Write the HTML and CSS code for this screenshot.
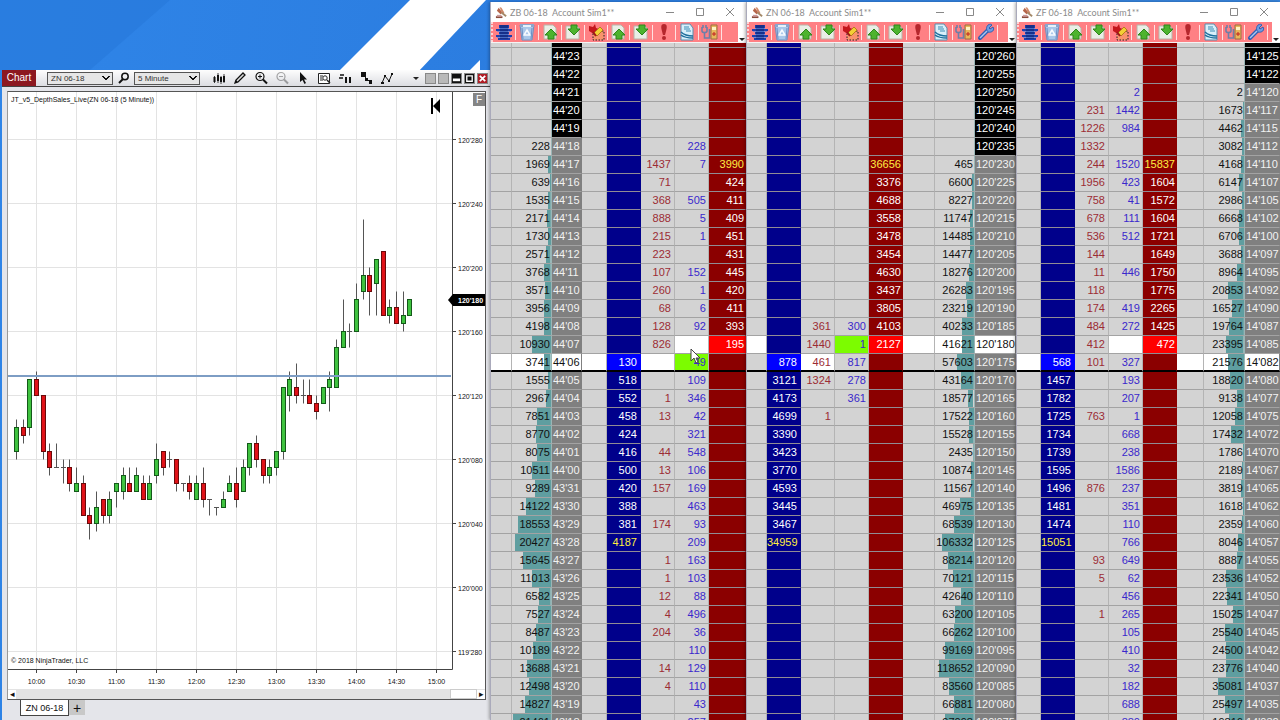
FILE: index.html
```html
<!DOCTYPE html>
<html lang="en">
<head>
<meta charset="utf-8">
<title>Trading desktop</title>
<link rel="stylesheet" href="styles.css">
</head>
<body>
<svg class="symbols" aria-hidden="true">
  <symbol id="gavel" viewBox="0 0 14 14"><path d="M4 2l4 5-2 2-4-4z" fill="#b5654a"/><path d="M5 1l2 1 3 5-1 2-2-2z" fill="#d08a6a"/><path d="M7 7l5 4" stroke="#a58a6a" stroke-width="2"/><path d="M1 11h7v2H1z" fill="#8a4a3a"/><path d="M2 9.500h5v2H2z" fill="#c99"/></symbol>
  <symbol id="rows" viewBox="0 0 18 18"><path d="M4 2h10v3H4zM1 6h16v2H1zM4 9h10v2H4zM1 12h16v2H1zM3 15h12v2H3z" fill="#1c3fae"/><path d="M5 2h8v14H5z" fill="#16308a"/><path d="M4 5.500h10M2 8.500h14M4 11.500h10M2 14.500h14" stroke="#5f86d8" stroke-width=".7"/></symbol>
  <symbol id="bin" viewBox="0 0 18 18"><path d="M2 2l2 15h10l2-15z" fill="#a9c7ea" stroke="#6f8fbe"/><path d="M2 1h14v3H2z" fill="#8aa6cd"/><path d="M5 3h8" stroke="#e6f1fb" stroke-width="2"/><path d="M6 12l3-5 3 5z" fill="none" stroke="#f7fbff" stroke-width="1.500"/><path d="M4 5l1 11M14 5l-1 11" stroke="#6d8fc4"/></symbol>
  <symbol id="up" viewBox="0 0 18 18"><path d="M3 2h9l3 3v11H3z" fill="#e9eee6" stroke="#b8b4a8"/><path d="M10 6l6 6h-3v4H7v-4H4z" fill="#4db32e" stroke="#2d861a"/></symbol>
  <symbol id="down" viewBox="0 0 18 18"><path d="M2 3h11l2 2v11H2z" fill="#e9eee6" stroke="#b8b4a8"/><path d="M10 12l6-6h-3V2H7v4H4z" fill="#4db32e" stroke="#2d861a"/></symbol>
  <symbol id="brush" viewBox="0 0 18 18"><path d="M6 8h11v9H6z" fill="#f0b048" fill-opacity=".4" stroke="#202020" stroke-dasharray="1.500 1.500"/><path d="M2 3l4 1 2-3 1 4 3 1-5 5-5-3z" fill="#c4161c"/><path d="M7 10l6-6 3 3-6 6z" fill="#f4cf35" stroke="#b4801c"/><path d="M6 9l3 4" stroke="#a01818" stroke-width="2"/></symbol>
  <symbol id="alert" viewBox="0 0 18 18"><path d="M9 1c4 0 3 4 1 11H8C6 5 5 1 9 1z" fill="#b5272d"/><circle cx="9" cy="15" r="2" fill="#b5272d"/></symbol>
  <symbol id="report" viewBox="0 0 18 18"><path d="M3 1h9l3 4v12H3z" fill="#d8effa" stroke="#5b8fae"/><path d="M6 4h5M6 6h6M8 8h5" stroke="#3c8db5"/><path d="M3 9c3 3 6 4 12 4M3 12c4 3 8 3 12 3" fill="none" stroke="#1e6f9c" stroke-width="1.500"/></symbol>
  <symbol id="link" viewBox="0 0 18 18"><path d="M1 4v4c0 2 5 2 5 0V4M2 2v3M5 2v3M3.500 9v6h5v-9" fill="none" stroke="#6e7fa8" stroke-width="1.600"/><path d="M10 2h6v14h-6z" fill="#e9b65a" stroke="#9a7140"/><path d="M11 4h4v3h-4z" fill="#fff3c4"/><path d="M11 11h4M13 9v4" stroke="#c02020"/></symbol>
  <symbol id="wrench" viewBox="0 0 18 18"><path d="M3 15l8-8" stroke="#2f5fb4" stroke-width="4" stroke-linecap="round"/><path d="M11 2c2-1 3-1 4 0l-3 3 1 1 3-2c2 3-1 6-5 5-2-2-2-5 0-7z" fill="#6c9ce0" stroke="#2f5fb4"/><path d="M3 15l7-7" stroke="#a8c6f0" stroke-width="1.500"/></symbol>
</svg>

<main class="desktop">
  <svg class="wallpaper" aria-hidden="true">
    <path d="M0 0H170L90 70H0z" fill="#2375d8" opacity=".5"/>
    <path d="M338 72L410 0H486L418 72z" fill="#fff"/>
    <path d="M468 72L480 60V72z" fill="#fff"/>
  </svg>

  <section class="chart-window" aria-label="Chart">
    <header class="chart-bar">
      <strong class="chart-tag">Chart</strong>
      <select class="pick" aria-label="Instrument"><option>ZN 06-18</option></select>
      <button class="tool" aria-label="Search"><svg viewBox="0 0 14 14"><circle cx="8" cy="5.500" r="3.200" fill="none" stroke="#111" stroke-width="1.500"/><path d="M6 8l-4 4" stroke="#111" stroke-width="2"/></svg></button>
      <select class="pick" aria-label="Interval"><option>5 Minute</option></select>
      <div class="tools">
        <button class="tool" aria-label="Chart style"><svg viewBox="0 0 14 14"><path d="M2.500 6v5M6 4v6M9 6v5M12 5v6" stroke="#111" stroke-width="2"/><path d="M2.500 5v7M6 2v10M9 5v8M12 3v9" stroke="#111" stroke-width=".8"/></svg></button>
        <button class="tool" aria-label="Draw"><svg viewBox="0 0 14 14"><path d="M2 12l1-3 7-7 2 2-7 7z" fill="#ddd" stroke="#111" stroke-width="1.300"/><path d="M2 12l1-3 2 2z" fill="#111"/></svg></button>
        <button class="tool" aria-label="Zoom in"><svg viewBox="0 0 14 14"><circle cx="6" cy="5.500" r="4" fill="none" stroke="#111" stroke-width="1.200"/><path d="M9 8.500l4 4" stroke="#111" stroke-width="2"/><path d="M4 5.500h4M6 3.500v4" stroke="#111"/></svg></button>
        <button class="tool faded" aria-label="Zoom out"><svg viewBox="0 0 14 14"><circle cx="6" cy="5.500" r="4" fill="none" stroke="#111" stroke-width="1.200"/><path d="M9 8.500l4 4" stroke="#111" stroke-width="2"/><path d="M4 5.500h4" stroke="#111"/></svg></button>
        <button class="tool" aria-label="Pointer"><svg viewBox="0 0 14 14"><path d="M4 1v10l2.500-2 2 4 1.500-1-2-3.500H11z" fill="#111"/></svg></button>
        <button class="tool" aria-label="Data box"><svg viewBox="0 0 14 14"><path d="M1.500 2.500h11v10h-11z" fill="#fff" stroke="#222"/><path d="M3 5h3M3 7h2M3 9h3" stroke="#222"/><circle cx="8" cy="7" r="2.200" fill="#fff" stroke="#222"/><path d="M10 9l3 3" stroke="#222" stroke-width="1.500"/></svg></button>
        <button class="tool" aria-label="Chart trader"><svg viewBox="0 0 14 14"><path d="M2 4h4M1 7h4" stroke="#111" stroke-width="1.500"/><path d="M8 6v6M12 6v6" stroke="#111" stroke-width="2"/></svg></button>
        <button class="tool" aria-label="Strategies"><svg viewBox="0 0 14 14"><path d="M2 1h5v5H2zM6 7h3v3H6zM10 9h3v4h-3z" fill="#111"/><path d="M6 6l6 6" stroke="#111"/></svg></button>
        <button class="tool" aria-label="Indicators"><svg viewBox="0 0 14 14"><path d="M2 12l3-7 4 5 3-7" fill="none" stroke="#111"/><path d="M1 11h3v2H1zM4 4h2v2H4zM8 9h2v2H8zM11 2h2v2h-2z" fill="#111"/></svg></button>
      </div>
      <div class="boxes">
        <span class="caret"></span>
        <button class="box" aria-label="Link instrument"></button>
        <button class="box" aria-label="Link interval"></button>
        <button class="box dark" aria-label="Minimize"><svg viewBox="0 0 10 10"><path d="M1 5h8v3H1z" fill="#fff"/></svg></button>
        <button class="box dark" aria-label="Maximize"><svg viewBox="0 0 10 10"><path d="M2 2h6v6H2z" fill="none" stroke="#fff" stroke-width="1.500"/></svg></button>
        <button class="box close" aria-label="Close"><svg viewBox="0 0 10 10"><path d="M2 2l6 6M8 2L2 8" stroke="#fff" stroke-width="2"/></svg></button>
      </div>
    </header>
    <div class="chart-frame">
      <svg class="plot" id="plot" viewBox="0 0 477 597" role="img" aria-label="ZN 06-18 five minute candles"></svg>
      <div class="scroller">
        <button class="arrow" aria-label="Scroll left">◂</button>
        <span class="thumb"></span>
        <button class="arrow" aria-label="Scroll right">▸</button>
      </div>
    </div>
    <nav class="tabs">
      <button class="tab">ZN 06-18</button>
      <button class="tab-add" aria-label="Add tab">+</button>
    </nav>
  </section>

  <section class="ladder zb" id="zb" aria-label="ZB ladder">
    <svg class="pointer" viewBox="0 0 12 18" aria-hidden="true"><path d="M1 1v12l3-3 2 5 2-1-2-4h4z" fill="#fff" stroke="#444"/></svg>
  </section>
  <section class="ladder zn" id="zn" aria-label="ZN ladder"></section>
  <section class="ladder zf" id="zf" aria-label="ZF ladder"></section>
</main>
<script src="app.js"></script>
</body>
</html>
```
FILE: styles.css
```css
* { box-sizing: border-box; }

body {
  margin: 0;
  background: #2b7cdf;
  font-family: "Liberation Sans", Arial, sans-serif;
  color: #111;
}

button, select {
  font: inherit;
  color: inherit;
  margin: 0;
  padding: 0;
  border: 0;
  background: none;
}

.symbols { display: none; }

.desktop {
  position: relative;
  display: grid;
  grid-template-columns: 490fr 256fr 270fr 264fr;
  grid-template-rows: minmax(0, 1fr);
  height: 100vh;
  overflow: hidden;
  background: linear-gradient(100deg, #2f85e8, #2b7cdf 40%, #3a86dc);
}

.wallpaper {
  position: absolute;
  left: 0;
  top: 0;
  width: 492px;
  height: 72px;
}

/* Chart window */
.chart-window {
  position: relative;
  display: flex;
  flex-direction: column;
  min-width: 0;
  margin: 70px 0 0 2px;
  background: #e4e5ea;
}

.chart-bar {
  display: flex;
  align-items: center;
  height: 17px;
  padding-right: 2px;
  border-bottom: 1px solid #444;
  background: linear-gradient(#fdfdfd, #dcdde2);
}

.chart-tag {
  align-self: stretch;
  width: 34px;
  margin-right: 11px;
  background: #8c1820;
  color: #fff;
  font-size: 10px;
  font-weight: 400;
  line-height: 16px;
  text-align: center;
}

.pick {
  appearance: none;
  width: 66px;
  height: 13px;
  padding-left: 3px;
  border: 1px solid #555;
  border-radius: 0;
  background-color: #e6e6e6;
  color: #333;
  font-size: 8px;
  line-height: 11px;
  background-image:
    linear-gradient(45deg, transparent 50%, #111 50%, #111 75%, transparent 75%),
    linear-gradient(-45deg, transparent 50%, #111 50%, #111 75%, transparent 75%);
  background-size: 4px 4px;
  background-position: right 6px center, right 2px center;
  background-repeat: no-repeat;
}

.tool {
  width: 21px;
  height: 14px;
  display: flex;
  justify-content: center;
}

.tool svg { width: 14px; height: 14px; }
.faded { opacity: .35; }
.tools { display: flex; margin-left: 8px; }

.boxes {
  display: flex;
  align-items: center;
  gap: 2px;
  margin-left: auto;
}

.caret {
  margin-right: 4px;
  border: 3px solid transparent;
  border-top-color: #222;
  border-bottom: 0;
}

.box {
  width: 11px;
  height: 11px;
  border: 1px solid #888;
  background: #b9b9b9;
  line-height: 0;
}

.box svg { width: 9px; height: 9px; }
.dark { background: #111; }
.close { background: #b01c24; }

.chart-frame {
  flex: 1;
  min-height: 0;
  display: flex;
  flex-direction: column;
  margin: 4px 4px 0 5px;
  border: 1px solid #555;
  border-left: 1px solid #999;
  background: #fff;
}

.plot { display: block; width: 100%; flex: 1; min-height: 0; }
.grid { stroke: #e3e3e3; }
.axis { stroke: #444; }
.level { stroke: #7d9dc4; stroke-width: 2; }
.wick { stroke: #555; }
.up { fill: #3fc23f; stroke: #14591a; }
.fall { fill: #e01218; stroke: #6a0a0a; }
.small { font-size: 7px; fill: #111; }
.center { text-anchor: middle; }
.last { fill: #fff; font-weight: 700; }

.scroller {
  display: flex;
  align-items: center;
  flex: none;
  height: 10px;
  background: #e3e3e3;
}

.arrow { width: 8px; font-size: 9px; line-height: 9px; background: #fff; }
.thumb {
  width: 27px;
  height: 10px;
  margin-left: auto;
  border: 1px solid #ccc;
  background: #fff;
}

.tabs { display: flex; flex: none; height: 20px; padding-left: 18px; align-items: flex-start; }
.tab {
  width: 49px;
  height: 16px;
  border: 1px solid #444;
  border-top: 0;
  background: #fff;
  font-size: 9px;
}
.tab-add { width: 16px; height: 15px; background: #c8c8c8; font-size: 14px; line-height: 14px; }

/* Ladder windows */
.ladder {
  position: relative;
  min-width: 0;
  margin-top: 2px;
  border-left: 1px solid #aab;
  background: #d3d3d3;
  box-shadow: -1px 0 3px rgba(0, 0, 0, .3);
}

.titlebar {
  display: flex;
  align-items: center;
  height: 20px;
  padding: 0 11px 0 4px;
  background: #fff;
  color: #8b8b8b;
}

.gavel { width: 13px; height: 13px; margin-right: 2px; }
.title { flex: 1; margin: 0; font-family: Lato, sans-serif; font-weight: 400; font-size: 9px; white-space: pre; }
.sys { display: flex; gap: 20px; }
.sys button { width: 10px; height: 10px; line-height: 0; }
.sys svg { width: 10px; height: 10px; fill: none; stroke: #888; }

.toolbar {
  display: flex;
  height: 21px;
  padding-right: 8px;
  border-bottom: 1px solid #f4f4f4;
  background: #fff;
}

.strip {
  flex: 1;
  display: flex;
  align-items: center;
  padding-right: 10px;
  background: #ff8084;
  border-left: 2px dotted #ffd5d5;
}

.zb .strip { padding-right: 16px; }
.zf .strip { padding-right: 4px; }

.strip button {
  flex: 1;
  height: 15px;
  display: flex;
  align-items: center;
  justify-content: center;
  border-right: 1px solid #ffe2e2;
}

.strip svg { width: 18px; height: 18px; flex: none; }

.overflow {
  position: absolute;
  right: 1px;
  top: 36px;
  border: 3px solid transparent;
  border-top-color: #222;
  border-bottom: 0;
}

.rows {
  width: 100%;
  table-layout: fixed;
  border-collapse: separate;
  border-spacing: 0;
  font-size: 11px;
  line-height: 14px;
}

.rows td {
  height: 18px;
  padding: 0 3px 2px 0;
  border-bottom: 1px solid #a3a3a3;
  border-right: 1px solid #b4b4b4;
  text-align: right;
  overflow: hidden;
  white-space: nowrap;
}

.rows .cut td { height: 5px; padding: 0; line-height: 3px; }
.rows .mark td { padding-bottom: 1px; border-bottom: 2px solid #000; }
.rows .vol { padding-right: 1px; border-right: 1px solid #9ab5b5; background: linear-gradient(#5f9ea0, #5f9ea0) right / var(--bar, 0) 100% no-repeat; }
.rows .price { padding-left: 1px; padding-right: 0; border-right-color: #808080; background: #808080; color: #f2f2f2; text-align: left; }
.rows .far { background: #000; color: #fff; border-right-color: #000; }
.rows .bid { background: #00008b; border-right-color: #00008b; color: #fff; }
.rows .ask { background: #8b0000; border-right-color: #8b0000; color: #fff; }
.rows .ask { padding-right: 1px; }
.rows .bid, .rows .ask { border-bottom-color: #918c94; }
.rows .mark .bid, .rows .mark .ask { border-bottom-color: #000; }
.rows .sell { color: #9c2c34; }
.rows .buy { padding-right: 2px; color: #3a28cc; }
.rows .total { color: #ffee40; }
.rows .white { background-color: #fff; color: #111; }
.rows .white.sell { color: #9c2c34; }
.rows .lime { background: #7cfc00; }
.rows .bid.hot { background: #0000ff; border-right-color: #0000ff; }
.rows .ask.hot { background: #ff0000; border-right-color: #ff0000; }

.pointer {
  position: absolute;
  left: 199px;
  top: 346px;
  width: 12px;
  height: 18px;
}
```
FILE: app.js
```js
// Candles: body top, body bottom, high, low, direction (in price steps above 120'080).
const candles = `4 1 5 0 u|4 3 5 2 d|10 4 10 3 u|10 8 11 8 d|8 1 8 0 d|1 -1 2 -2 d|-1 -1 2 -1 n|-1 -1 0 -3 n|-1 -3 0 -4 d|-3 -4 -1 -4 u
-3 -7 -2 -7 d|-7 -8 -6 -10 d|-6 -8 -4 -9 u|-5 -7 -5 -8 d|-5 -7 -4 -8 u|-3 -4 -3 -6 u|-2 -4 -1 -5 u|-3 -4 -1 -4 d|-2 -4 -1 -4 u|-3 -5 -2 -5 d
-3 -5 -2 -5 u|0 -2 2 -3 u|1 -1 1 -2 d|0 0 1 -1 n|0 -3 0 -4 d|-3 -3 -3 -4 n|-3 -4 -2 -5 d|-3 -5 -2 -5 u|-3 -5 -1 -6 d|-5 -5 -5 -7 n
-6 -6 -6 -7 n|-5 -6 -4 -6 u|-3 -4 -2 -4 u|-3 -5 -1 -6 d|-1 -4 0 -4 u|2 -1 2 -2 u|2 0 3 -1 d|0 -2 0 -3 d|-1 -2 0 -3 u|1 -1 1 -2 u
9 1 9 0 u|10 8 11 6 u|9 8 12 7 d|8 8 10 7 n|8 7 10 7 d|7 6 8 5 d|9 7 9 7 u|10 9 11 6 u|14 9 15 9 u|16 14 20 14 u
16 16 17 14 n|20 16 22 16 u|23 21 30 20 u|23 21 24 18 d|25 22 25 18 u|26 18 26 18 d|19 18 20 17 u|19 17 21 17 d|18 17 21 16 u|20 18 20 18 u`
  .split(/[|\n]/).map(c => c.split(' '));

function drawChart() {
  const parts = [];
  const y = level => 367.5 - 8 * level;
  const times = ['10:00', '10:30', '11:00', '11:30', '12:00', '12:30', '13:00', '13:30', '14:00', '14:30', '15:00'];
  const prices = ["120'280", "120'240", "120'200", "120'160", "120'120", "120'080", "120'040", "120'000", "119'280"];
  times.forEach((t, i) => {
    const x = 28.5 + 40 * i;
    parts.push(`<path class="grid" d="M${x} 0V577"/><path class="axis" d="M${x} 578v3"/><text class="small center" x="${x}" y="592">${t}</text>`);
  });
  prices.forEach((p, i) => {
    const gy = 47.5 + 64 * i;
    parts.push(`<path class="grid" d="M0 ${gy}H444"/><path class="axis" d="M444 ${gy}h4"/><text class="small" x="450" y="${gy + 3}">${p}</text>`);
  });
  parts.push('<path class="axis" d="M444.500 0V577.500H0" fill="none"/>');
  candles.forEach(([top, bottom, high, low, dir], i) => {
    const x = 8.5 + Math.round(i * 20 / 3);
    parts.push(`<path class="wick" d="M${x} ${y(high)}V${y(low)}"/>`);
    parts.push(dir === 'n'
      ? `<path class="wick" d="M${x - 2.5} ${y(top)}h5"/>`
      : `<rect class="${dir === 'u' ? 'up' : 'fall'}" x="${x - 2}" y="${y(top)}" width="4" height="${8 * (top - bottom)}"/>`);
  });
  parts.push('<path class="level" d="M0 284H443"/>');
  parts.push(`<path d="M440 208l5-6h32v12h-32z"/><text class="small last" x="450" y="211">120'180</text>`);
  parts.push('<text class="small" x="3" y="10">JT_v5_DepthSales_Live(ZN 06-18 (5 Minute))</text>');
  parts.push('<text class="small" x="3" y="571">© 2018 NinjaTrader, LLC</text>');
  parts.push('<path d="M423 6h2v16h-2zM425 14l7-7v14z"/>');
  parts.push('<rect x="465" y="1" width="12" height="13" fill="#858585"/><text x="468" y="11" font-size="10" fill="#fff">F</text>');
  document.getElementById('plot').innerHTML = parts.join('');
}

// Row fields: volume, price, bid size, sells, buys, ask size.
const ladders = {
  zb: {
    title: 'ZB 06-18  Account Sim1**', far: 5, barPerLot: 37 / 20427 / 40,
    cols: [['gap', 21], ['vol', 40], ['price', 30], ['gap', 25], ['bid', 34], ['sell', 34], ['buy', 34], ['ask', 37]],
    white: { 16: ['buy'], 17: ['gap', 'vol', 'price', 'sell'] }, lime: 17,
    icons: ['rows', 'bin', 'up', 'down', 'brush', 'up', 'down', 'alert', 'report', 'link'],
    rows: `|44'23||||
|44'22||||
|44'21||||
|44'20||||
|44'19||||
228|44'18|||228|
1969|44'17||1437|7|3990
639|44'16||71||424
1535|44'15||368|505|411
2171|44'14||888|5|409
1730|44'13||215|1|451
2571|44'12||223||431
3768|44'11||107|152|445
3571|44'10||260|1|420
3956|44'09||68|6|411
4198|44'08||128|92|393
10930|44'07||826||195
3741|44'06|130||49|
1555|44'05|518||109|
2967|44'04|552|1|346|
7851|44'03|458|13|42|
8770|44'02|424||321|
8075|44'01|416|44|548|
10511|44'00|500|13|106|
9289|43'31|420|157|169|
14122|43'30|388||463|
18553|43'29|381|174|93|
20427|43'28|4187||209|
15645|43'27||1|163|
11013|43'26||1|103|
6582|43'25||12|88|
7527|43'24||4|496|
8487|43'23||204|36|
10189|43'22|||110|
13688|43'21||14|129|
12498|43'20||4|110|
14827|43'19|||43|
21461|43'18|||257|`.split('\n')
  },
  zn: {
    title: 'ZN 06-18  Account Sim1**', far: 6, barPerLot: 36 / 118652 / 40,
    cols: [['gap', 20], ['bid', 34], ['sell', 34], ['buy', 34], ['ask', 34], ['gap', 32], ['vol', 40], ['price', 41]],
    white: { 16: ['gap', 'vol', 'price'], 17: ['sell'] }, lime: 16,
    icons: ['rows', 'bin', 'up', 'down', 'brush', 'up', 'down', 'alert', 'report', 'link', 'wrench'],
    rows: `|120'260||||
|120'255||||
|120'250||||
|120'245||||
|120'240||||
|120'235||||
465|120'230||||36656
6600|120'225||||3376
8227|120'220||||4688
11747|120'215||||3558
14485|120'210||||3478
14477|120'205||||3454
18276|120'200||||4630
26283|120'195||||3437
23219|120'190||||3805
40233|120'185||361|300|4103
41621|120'180||1440|1|2127
57603|120'175|878|461|817|
43164|120'170|3121|1324|278|
18577|120'165|4173||361|
17522|120'160|4699|1||
15528|120'155|3390|||
2435|120'150|3423|||
10874|120'145|3770|||
11567|120'140|4593|||
46975|120'135|3445|||
68539|120'130|3467|||
106332|120'125|34959|||
88214|120'120||||
70121|120'115||||
42640|120'110||||
63200|120'105||||
66262|120'100||||
99169|120'095||||
118652|120'090||||
83560|120'085||||
66881|120'080||||
97098|120'075||||`.split('\n')
  },
  zf: {
    title: 'ZF 06-18  Account Sim1**', far: 2, barPerLot: 27 / 35081 / 41,
    cols: [['gap', 24], ['bid', 34], ['sell', 34], ['buy', 34], ['ask', 34], ['gap', 27], ['vol', 41], ['price', 35]],
    white: { 16: ['buy'], 17: ['gap', 'vol', 'price'] }, lime: -1,
    icons: ['rows', 'bin', 'up', 'down', 'brush', 'up', 'down', 'alert', 'report', 'link', 'wrench'],
    rows: `|14'125||||
|14'122||||
2|14'120|||2|
1673|14'117||231|1442|
4462|14'115||1226|984|
3082|14'112||1332||
4168|14'110||244|1520|15837
6147|14'107||1956|423|1604
2986|14'105||758|41|1572
6668|14'102||678|111|1604
6706|14'100||536|512|1721
3688|14'097||144||1649
8964|14'095||11|446|1750
20853|14'092||118||1775
16527|14'090||174|419|2265
19764|14'087||484|272|1425
23395|14'085||412||472
21576|14'082|568|101|327|
18820|14'080|1457||193|
9138|14'077|1782||207|
12058|14'075|1725|763|1|
17432|14'072|1734||668|
1786|14'070|1739||238|
2189|14'067|1595||1586|
3819|14'065|1496|876|237|
1618|14'062|1481||351|
2359|14'060|1474||110|
8046|14'057|15051||766|
8887|14'055||93|649|
23536|14'052||5|62|
22341|14'050|||456|
15025|14'047||1|265|
25540|14'045|||105|
24500|14'042|||410|
23776|14'040|||32|
35081|14'037|||182|
25497|14'035|||688|
19816|14'032|||880|`.split('\n')
  }
};

function cell(kind, row, k, spec) {
  const names = [kind];
  if (kind === 'price' && k < spec.far) names.push('far');
  if ((kind === 'ask' && k === 6) || (kind === 'bid' && k === 27)) names.push('total');
  if ((kind === 'ask' && k === 16) || (kind === 'bid' && k === 17)) names.push('hot');
  if ((spec.white[k] || []).includes(kind)) names.push('white');
  if (kind === 'buy' && spec.lime === k) names.push('lime');
  const bar = kind === 'vol' && row.vol ? ` style="--bar:${(row.vol * spec.barPerLot * 100).toFixed(1)}%"` : '';
  return `<td class="${names.join(' ')}"${bar}>${row[kind] || ''}</td>`;
}

function drawLadder(id, spec) {
  const total = spec.cols.reduce((sum, c) => sum + c[1], 0);
  const cols = spec.cols.map(c => `<col style="width:${(c[1] / total * 100).toFixed(3)}%">`).join('');
  const lines = [`<tr class="cut">${spec.cols.map(c => cell(c[0], {}, 0, spec)).join('')}</tr>`];
  spec.rows.forEach((text, k) => {
    const [vol, price, bid, sell, buy, ask] = text.split('|');
    const row = { vol, price, bid, sell, buy, ask };
    lines.push(`<tr${k === 17 ? ' class="mark"' : ''}>${spec.cols.map(c => cell(c[0], row, k, spec)).join('')}</tr>`);
  });
  const icons = spec.icons.map(n => `<button aria-label="${n}"><svg><use href="#${n}"/></svg></button>`).join('');
  document.getElementById(id).insertAdjacentHTML('afterbegin', `
    <header class="titlebar"><svg class="gavel"><use href="#gavel"/></svg><h2 class="title">${spec.title}</h2>
      <div class="sys">
        <button aria-label="Minimize"><svg viewBox="0 0 10 10"><path d="M1 5.500h8"/></svg></button>
        <button aria-label="Maximize"><svg viewBox="0 0 10 10"><path d="M1.500 1.500h7v7h-7z"/></svg></button>
        <button aria-label="Close"><svg viewBox="0 0 10 10"><path d="M1 1l8 8M9 1L1 9"/></svg></button>
      </div></header>
    <div class="toolbar"><div class="strip">${icons}</div><span class="overflow"></span></div>
    <table class="rows"><colgroup>${cols}</colgroup><tbody>${lines.join('')}</tbody></table>`);
}

drawChart();
Object.entries(ladders).forEach(([id, spec]) => drawLadder(id, spec));
```
